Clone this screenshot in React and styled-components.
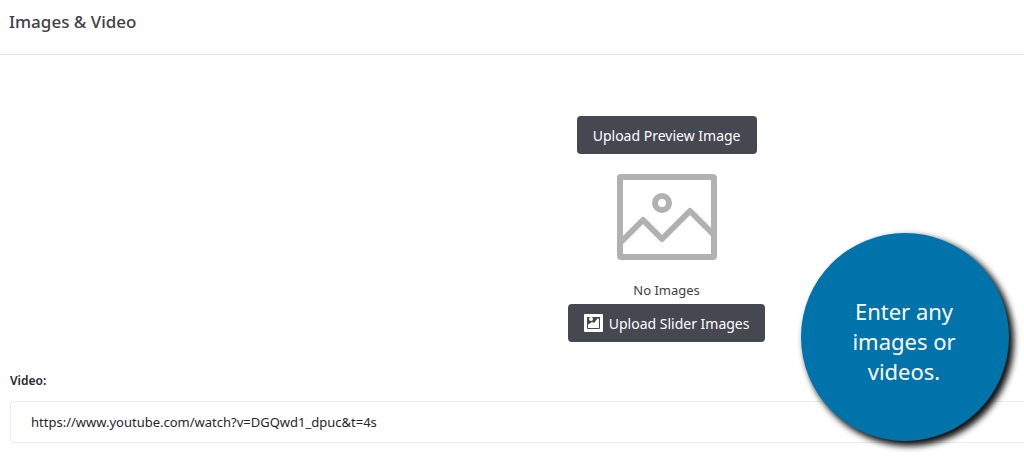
import React from 'react';
import styled, { createGlobalStyle } from 'styled-components';

const GlobalStyle = createGlobalStyle`
  * {
    box-sizing: border-box;
  }

  body {
    margin: 0;
    background: #fff;
    color: #3f4047;
    font-family: 'Noto Sans', 'Open Sans', sans-serif;
    font-size: 13px;
    line-height: 20px;
  }
`;

const Page = styled.main`
  position: relative;
  overflow: hidden;
  padding-bottom: 13px;
`;

const Header = styled.header`
  padding: 10px 9px 20px;
  border-bottom: 1px solid #e2e2ea;
`;

const Title = styled.h2`
  margin: 0;
  font-size: 17px;
  font-weight: 500;
  line-height: 24px;
`;

/* the form runs wider than the visible pane */
const Form = styled.form`
  width: 130%;
  padding: 61px 8px 0 10px;
`;

const Uploads = styled.div`
  display: flex;
  flex-direction: column;
  align-items: center;
`;

const UploadButton = styled.button`
  display: flex;
  align-items: center;
  gap: 6px;
  height: 38px;
  padding: 0 16px;
  border: none;
  border-radius: 4px;
  background: #454751;
  color: #fff;
  font-family: inherit;
  font-size: 14px;
  cursor: pointer;
`;

const Placeholder = styled.svg`
  width: 100px;
  height: 86px;
  margin: 20px 0;
`;

const Caption = styled.p`
  margin: 0 0 4px;
`;

const Field = styled.div`
  display: flex;
  flex-direction: column;
  gap: 10px;
  margin-top: 29px;
`;

const Label = styled.label`
  color: #24262d;
  font-size: 12px;
  font-weight: 600;
`;

const TextInput = styled.input`
  width: 100%;
  height: 42px;
  padding: 0 20px;
  border: 1px solid #ebebeb;
  border-radius: 4px;
  background: #fff;
  color: #24262d;
  font-family: inherit;
  font-size: 13px;
  outline: none;
`;

const Callout = styled.aside`
  position: absolute;
  right: 15px;
  bottom: 15px;
  display: flex;
  align-items: center;
  justify-content: center;
  width: 208px;
  height: 208px;
  padding: 8px 42px 0 40px;
  border-radius: 50%;
  background: #0073aa;
  box-shadow: 4px 4px 6px 1px #111;
  color: #fff;
  font-size: 22px;
  line-height: 30px;
  text-align: center;
`;

function ImagePlaceholder() {
  return (
    <Placeholder viewBox="0 0 100 86" fill="none" stroke="#b1b1b1" strokeWidth="6" aria-hidden="true">
      <rect x="3" y="3" width="94" height="80" rx="1" />
      <circle cx="45" cy="29" r="7" />
      <path d="M3 69 26 46 45 65 73 37 97 61" strokeLinejoin="round" />
    </Placeholder>
  );
}

function SliderIcon() {
  return (
    <svg width="19" height="18" viewBox="0 0 19 18" aria-hidden="true">
      <rect width="19" height="18" rx="1" fill="#fff" />
      <path d="M3 3h13v4l-2-3-4 5-2-1-3 2-2 1z" fill="#454751" />
      <circle cx="7" cy="5" r="2" fill="#fff" />
      <path d="M3.5 3v11.5h12V3" fill="none" stroke="#454751" />
    </svg>
  );
}

function App() {
  const [video, setVideo] = React.useState('https://www.youtube.com/watch?v=DGQwd1_dpuc&t=4s');

  return (
    <>
      <GlobalStyle />
      <Page>
        <Header>
          <Title>Images &amp; Video</Title>
        </Header>

        <Form>
          <Uploads>
            <UploadButton type="button">Upload Preview Image</UploadButton>
            <ImagePlaceholder />
            <Caption>No Images</Caption>
            <UploadButton type="button">
              <SliderIcon />
              Upload Slider Images
            </UploadButton>
          </Uploads>

          <Field>
            <Label htmlFor="video">Video:</Label>
            <TextInput
              id="video"
              type="text"
              value={video}
              onChange={(e) => setVideo(e.target.value)}
            />
          </Field>
        </Form>

        <Callout>Enter any images or videos.</Callout>
      </Page>
    </>
  );
}

export default App;
